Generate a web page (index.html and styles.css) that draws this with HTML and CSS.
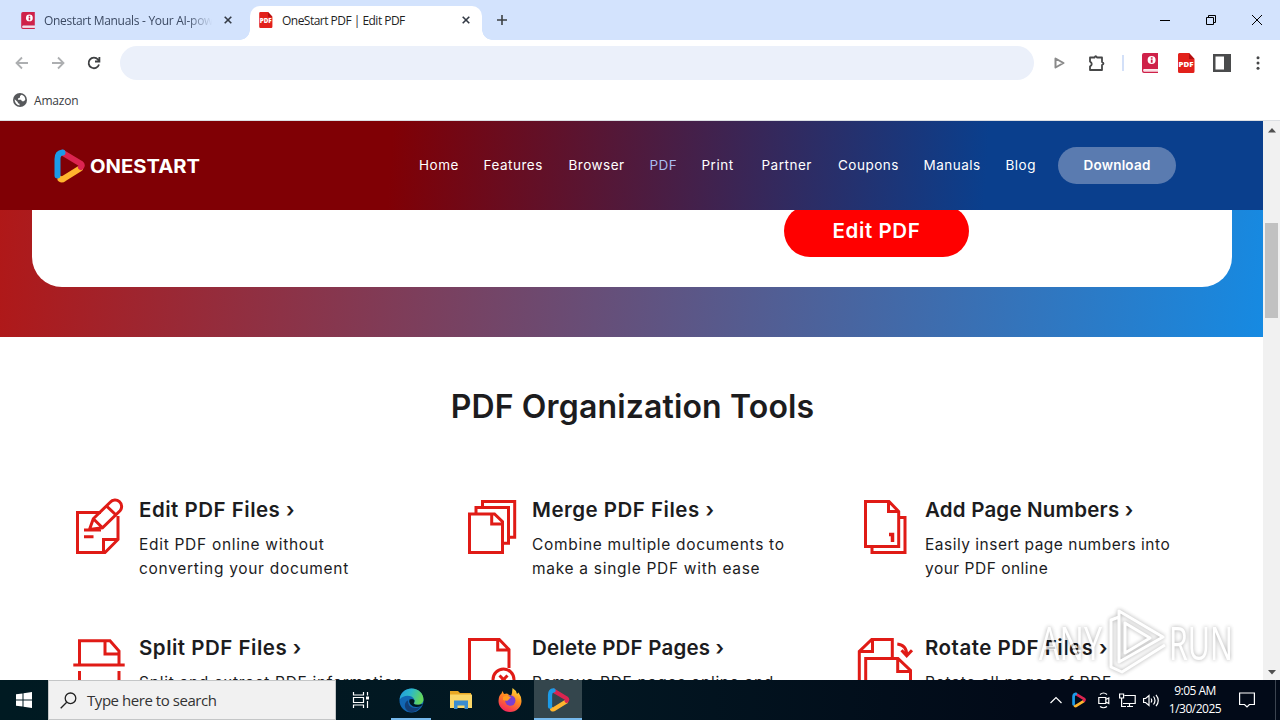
FILE: index.html
```
<!DOCTYPE html>
<html lang="en">
<head>
  <meta charset="UTF-8">
  <meta name="viewport" content="width=device-width, initial-scale=1.0">
  <title>OneStart PDF | Edit PDF</title>
  <link rel="stylesheet" href="styles.css">
</head>
<body>
  <!-- shared symbols -->
  <svg class="defs" width="0" height="0">
    <symbol id="book" viewBox="0 0 16 20">
      <path fill="#cf2149" d="M2 0h14v16H2a1.5 1.5 0 0 0 0 2.6h14V20H2a2 2 0 0 1-2-2V2a2 2 0 0 1 2-2z"/>
      <path fill="#fbdde3" d="M1.6 16.4H16v2H1.6z"/>
      <circle cx="9.6" cy="7" r="4" fill="#fff"/>
      <path fill="#cf2149" d="M8.8 4.3h1.8v1.5H8.8zM8.8 6.4h1.8v3.4H8.8z"/>
    </symbol>
    <symbol id="pdf" viewBox="0 0 17 20">
      <path fill="#e2211b" d="M1.500 0h9.500l5.500 6v12.500a1.500 1.500 0 0 1-1.500 1.500H1.500a1.500 1.500 0 0 1-1.500-1.500V1.500a1.500 1.500 0 0 1 1.500-1.500z"/>
      <path fill="#b30f10" d="M11 0l5.500 6h-5.500z"/>
      <text x="0.600" y="13.800" class="pdf-label" textLength="15" lengthAdjust="spacingAndGlyphs">PDF</text>
    </symbol>
    <symbol id="play" viewBox="0 0 31 34">
      <path fill="none" stroke="#ffb52e" stroke-width="6" stroke-linecap="round" d="M6.500 30Q8 31 10 29.500L26 19.500"/>
      <path fill="none" stroke="#dc2450" stroke-width="6" stroke-linecap="round" stroke-linejoin="round" d="M9 4L26.500 14.500Q28.500 16 27 18"/>
      <path fill="none" stroke="#1b9be8" stroke-width="6" stroke-linecap="round" d="M3.500 26.500V10Q3.500 4 8.500 3.500"/>
    </symbol>
  </svg>

  <div class="tabs">
    <div class="tab">
      <svg class="favicon" width="14" height="17"><use href="#book"/></svg>
      <span class="tab-title faded">Onestart Manuals - Your AI-pow</span>
      <svg class="tab-close" width="8" height="8" viewBox="0 0 8 8"><path d="M.7.7l6.600 6.600M7.300.7L.7 7.300"/></svg>
    </div>
    <div class="tab active">
      <svg class="favicon" width="14" height="16"><use href="#pdf"/></svg>
      <span class="tab-title">OneStart PDF | Edit PDF</span>
      <svg class="tab-close" width="8" height="8" viewBox="0 0 8 8"><path d="M.7.7l6.600 6.600M7.300.7L.7 7.300"/></svg>
    </div>
    <svg class="new-tab" width="10" height="10" viewBox="0 0 10 10"><path d="M5 0v10M0 5h10"/></svg>
    <div class="window-buttons">
      <svg width="10" height="10" viewBox="0 0 10 10"><path d="M0 5.500h10"/></svg>
      <svg width="10" height="10" viewBox="0 0 10 10"><path d="M.5 2.500h7v7h-7zM2.500 2.500v-2h7v7h-2"/></svg>
      <svg width="10" height="10" viewBox="0 0 10 10"><path d="M0 0l10 10M10 0L0 10"/></svg>
    </div>
  </div>

  <div class="toolbar">
    <div class="nav-icons">
      <svg class="disabled" width="14" height="14" viewBox="0 0 14 14"><path d="M13 7H2M7 1.500L1.500 7L7 12.500"/></svg>
      <svg class="disabled" width="14" height="14" viewBox="0 0 14 14"><path d="M1 7h11M7 1.500L12.500 7L7 12.500"/></svg>
      <svg width="14" height="14" viewBox="0 0 14 14"><path d="M12 8.500A5.300 5.300 0 1 1 11 3.500L12.200 5M12.400 1v4.500H8"/></svg>
    </div>
    <div class="address"></div>
    <div class="extensions">
      <svg width="11" height="12" viewBox="0 0 11 12"><path fill="none" stroke="#8a8a8a" stroke-width="2" stroke-linejoin="round" d="M1.500 10.500V1.500L9.500 6z"/></svg>
      <svg class="puzzle" width="18" height="18" viewBox="0 0 18 18"><path fill="none" stroke="#464748" stroke-width="1.800" stroke-linejoin="round" d="M2 3.500h4.500Q7.700 1 9 3.500h5V8q3 1.500 0 3v5H2v-3.500q3.500-2.500 0-5z"/></svg>
      <span class="divider"></span>
      <svg class="ext-book" width="16" height="20"><use href="#book"/></svg>
      <svg class="ext-pdf" width="17" height="20"><use href="#pdf"/></svg>
      <svg class="ext-panel" width="18" height="18" viewBox="0 0 18 18"><path fill="#4a4b4c" d="M0 0h18v18H0z"/><path fill="#fff" d="M2.500 2.500H11v13H2.500z"/></svg>
      <svg class="ext-more" width="4" height="14" viewBox="0 0 4 14"><g fill="#464748"><circle cx="2" cy="1.800" r="1.500"/><circle cx="2" cy="7" r="1.500"/><circle cx="2" cy="12.200" r="1.500"/></g></svg>
    </div>
  </div>

  <div class="bookmarks">
    <svg width="14" height="14" viewBox="0 0 14 14"><circle cx="7" cy="7" r="7" fill="#56585b"/><path fill="#fff" d="M8.500 1.800L7 3v1.500L5 5.500v1.200h3l1 1.600h1.800l1.500-1.500A5.400 5.400 0 0 0 8.500 1.800zM1.700 6.200l3 2.800.3 1.200 1.500.6v1.600A5.500 5.500 0 0 1 1.700 6.200z"/></svg>
    <span>Amazon</span>
  </div>

  <div class="viewport">
    <div class="page">
      <header class="header">
        <div class="logo">
          <svg width="31" height="34"><use href="#play"/></svg>
          <svg width="112" height="20" viewBox="0 0 112 20"><text x="0" y="16.800" class="logo-text" textLength="110" lengthAdjust="spacingAndGlyphs">ONESTART</text></svg>
        </div>
        <nav class="menu">
          <a>Home</a>
          <a>Features</a>
          <a>Browser</a>
          <a class="current">PDF</a>
          <a>Print</a>
          <a>Partner</a>
          <a>Coupons</a>
          <a>Manuals</a>
          <a>Blog</a>
          <a class="download">Download</a>
        </nav>
      </header>

      <section class="hero">
        <div class="hero-card">
          <a class="edit-button">Edit PDF</a>
        </div>
      </section>

      <h2>PDF Organization Tools</h2>

      <section class="tools">
        <div class="tool">
          <svg class="tool-icon" viewBox="0 0 70 60"><path d="M32 16.500H8.500v40H36L49 43.500V20M34.500 56V43.500H49M41.200 6.200L24.300 22.800L20.500 33.500L33.500 31.800L51 14.800A6.200 6.200 0 0 0 41.200 6.200zM24.300 22.800L33.500 31.800M37.500 10L47 19M15 34H32M15 40.700H24.500"/></svg>
          <div>
            <h3>Edit PDF Files ›</h3>
            <p>Edit PDF online without<br>converting your document</p>
          </div>
        </div>
        <div class="tool">
          <svg class="tool-icon" viewBox="0 0 70 60"><path d="M7.500 18H32.500L40.500 25.700V56.500H7.500zM29.700 18V28H40.500M14 17V11.500H46.500V47.300H41M20.500 11V5.500H52.700V41.300H47"/></svg>
          <div>
            <h3>Merge PDF Files ›</h3>
            <p>Combine multiple documents to<br>make a single PDF with ease</p>
          </div>
        </div>
        <div class="tool">
          <svg class="tool-icon" viewBox="0 0 70 60"><path d="M10.500 5.500H34L43.700 15.500V50.500H10.500zM33.500 5.500V15.500H43.700M17 51V56.500H50V21.500H44"/><path class="bold" d="M34 38.500H37.500V46"/></svg>
          <div>
            <h3 class="wide-title">Add Page Numbers ›</h3>
            <p class="tight">Easily insert page numbers into<br>your PDF online</p>
          </div>
        </div>
        <div class="tool">
          <svg class="tool-icon" viewBox="0 0 70 60"><path d="M10.500 31V6.700H41L50 17V31M36 6.700V20H50M4.300 31H55.700M10.500 37V60M50 37V60"/></svg>
          <div>
            <h3>Split PDF Files ›</h3>
            <p>Split and extract PDF information</p>
          </div>
        </div>
        <div class="tool">
          <svg class="tool-icon" viewBox="0 0 70 60"><path d="M7.500 60V5.500H37.300L47 15.500V34M35.700 5.500V16H47M37.500 41.500l8 8M45.500 41.500l-8 8"/><circle cx="41.500" cy="45.500" r="10.500"/></svg>
          <div>
            <h3 class="wide-title">Delete PDF Pages ›</h3>
            <p>Remove PDF pages online and</p>
          </div>
        </div>
        <div class="tool">
          <svg class="tool-icon" viewBox="0 0 70 60"><path d="M4.300 60V17.500L16.700 5.500H37.300V24M17.500 5.500V17.500H4.300M10.700 60V24.500H43L55.500 36.500V60M42.700 24.500V37.500H56M42.300 10Q51.700 11 51.700 21M46.500 16.300L51.700 21.800L57 16.300"/></svg>
          <div>
            <h3>Rotate PDF Files ›</h3>
            <p>Rotate all pages of PDF</p>
          </div>
        </div>
      </section>
    </div>

    <div class="scrollbar">
      <svg width="8" height="5" viewBox="0 0 8 5"><path d="M0 4.500L4 0l4 4.500z"/></svg>
      <div class="thumb"></div>
      <svg width="8" height="5" viewBox="0 0 8 5"><path d="M0 0h8L4 4.500z"/></svg>
    </div>
  </div>

  <svg class="watermark" width="210" height="70" viewBox="0 0 210 70">
    <text x="8" y="53" textLength="63" lengthAdjust="spacingAndGlyphs">ANY</text>
    <path d="M88 10L80 13V60L91 65L134 38M88 4V55L132 30zM94 16V46L119 31z"/>
    <text x="138" y="53" textLength="64" lengthAdjust="spacingAndGlyphs">RUN</text>
  </svg>

  <div class="taskbar">
    <div class="start">
      <svg width="16" height="16" viewBox="0 0 16 16"><path fill="#fff" d="M0 2.300L6.500 1.400V7.500H0zM7.500 1.200L16 0V7.500H7.500zM0 8.500H6.500V14.600L0 13.700zM7.500 8.500H16V16L7.500 14.800z"/></svg>
    </div>
    <div class="search">
      <svg width="17" height="17" viewBox="0 0 17 17"><path fill="none" stroke="#222" stroke-width="1.300" d="M6.700 10.300L.7 16.300"/><circle cx="10.500" cy="6.300" r="5.300" fill="none" stroke="#222" stroke-width="1.300"/></svg>
      <span>Type here to search</span>
    </div>
    <div class="task task-view">
      <svg width="18" height="16" viewBox="0 0 18 16"><path fill="none" stroke="#fff" stroke-width="1.200" d="M1.500 0v3h10V0M1.500 5.500h10v5h-10zM1.500 16v-3h10v3M15.500 0v3.500M15.500 9v7"/><path fill="#fff" d="M14 4.500h3v3h-3z"/></svg>
    </div>
    <div class="task running">
      <svg width="25" height="25" viewBox="0 0 25 25">
        <defs>
          <linearGradient id="edge" x1="0" y1="0" x2="1" y2=".3"><stop offset="0" stop-color="#2399dd"/><stop offset=".5" stop-color="#2cb8c9"/><stop offset="1" stop-color="#63d65c"/></linearGradient>
        </defs>
        <circle cx="12.500" cy="12.500" r="12" fill="#1267b4"/>
        <path fill="url(#edge)" d="M.6 11.500C1.500 4 7 .5 12.500.5C20 .5 24.600 6 24.500 11.500C24.400 16 20 17.500 16 16.500C14 15.800 16 14.500 15.500 12C14 7 5 6 .6 11.500z"/>
        <path fill="#123f78" d="M9 12.500C8.500 19 15 22 21.800 18.500C19 23 14 25 9.500 23.500C4 20 5.500 13.500 9 12.500z"/>
        <path fill="#001820" d="M10.500 11.500Q14.500 10 15.500 12.500Q15.500 14.500 14.500 15.300Q15.500 17.200 20 16.800L24 16L21.800 18.300Q15 20.500 11.500 16.500Q9.500 13.500 10.500 11.500z"/>
      </svg>
    </div>
    <div class="task">
      <svg width="22" height="18" viewBox="0 0 22 18"><path fill="#e9a824" d="M0 0h8l2 2h11v4H0z"/><path fill="#fbd768" d="M0 3.500h22V17H0z"/><path fill="#3b8cd0" d="M4 9.500h14V18h-3.500v-3.500h-7V18H4z"/></svg>
    </div>
    <div class="task">
      <svg width="24" height="24" viewBox="0 0 24 24">
        <defs>
          <linearGradient id="fox" x1=".8" y1="0" x2=".3" y2="1"><stop offset="0" stop-color="#ffe23f"/><stop offset=".45" stop-color="#ff8a1f"/><stop offset="1" stop-color="#f5225f"/></linearGradient>
        </defs>
        <path fill="url(#fox)" d="M4.500 3L6 6L9 5.500L13 8L14 5L14.500 0Q18 2 19 6L20.500 4.500Q23.500 8.500 23.500 13A11.500 11 0 0 1 .5 13Q.5 7.500 3.500 5.500z"/>
        <circle cx="12.300" cy="12.500" r="5.200" fill="#7a3fd0"/>
        <path fill="#ff9b20" d="M5 9Q9 6.500 13 9.500Q10.500 11 10 12.500Q7.500 13 5 12z"/>
      </svg>
    </div>
    <div class="task selected">
      <svg width="23" height="24"><use href="#play"/></svg>
    </div>
    <div class="tray">
      <svg class="caret" width="12" height="8" viewBox="0 0 12 8"><path d="M.5 7L6 1.500L11.500 7"/></svg>
      <svg class="tray-app" width="14" height="16"><use href="#play"/></svg>
      <svg class="camera" width="12" height="17" viewBox="0 0 12 17"><path d="M.8 5.500h7v6h-7zM7.800 7.500l3-1.500v5.500l-3-1.500M2 2.500Q5.500-.5 9 2.500M2 14.500Q5.500 17 9 14.500"/></svg>
      <svg width="17" height="15" viewBox="0 0 17 15"><path d="M5.500 2.500h10.700v8H4M8 13.500h6M10.500 10.500v3M.6 1h4v4h-4zM2.600 5v8.500H7"/></svg>
      <svg width="17" height="13" viewBox="0 0 17 13"><path d="M.6 4.500h2L6 1.500v10l-3.400-3H.6zM8 4.500q1.500 2 0 4M10.500 2.500q3 4 0 8M13 .8q4.500 5.700 0 11.400"/></svg>
      <div class="clock">9:05 AM<br>1/30/2025</div>
      <svg width="16" height="16" viewBox="0 0 16 16"><path d="M.6 1h14.800v11.500h-5L8 15L5.500 12.500H.6z"/></svg>
    </div>
  </div>
</body>
</html>
```
FILE: styles.css
```
body {
  margin: 0;
  width: 1280px;
  height: 720px;
  overflow: hidden;
  display: flex;
  flex-direction: column;
  background: #fff;
  font-family: Inter, sans-serif;
  color: #1c1c1e;
}

.defs {
  position: absolute;
}

.pdf-label {
  font: 800 7.5px "Open Sans", sans-serif;
  fill: #fff;
}

/* browser window */
.tabs,
.toolbar,
.bookmarks,
.taskbar {
  font-family: "Open Sans", sans-serif;
  font-size: 12px;
}

.tabs {
  height: 40px;
  flex: none;
  background: #d3e3fd;
  display: flex;
  align-items: center;
}

.tab {
  box-sizing: border-box;
  width: 250px;
  height: 40px;
  padding: 0 18px 0 21px;
  display: flex;
  align-items: center;
  color: #3c4a63;
}

.tab.active {
  position: relative;
  width: 232px;
  height: 34px;
  margin-top: 6px;
  padding: 0 12px 6px 9px;
  background: #fff;
  border-radius: 10px 10px 0 0;
  color: #1f1f1f;
}

/* curved feet of the active tab */
.tab.active::before,
.tab.active::after {
  content: "";
  position: absolute;
  bottom: 0;
  width: 10px;
  height: 10px;
}

.tab.active::before {
  left: -10px;
  background: radial-gradient(circle at 0 0, transparent 9.5px, #fff 10px);
}

.tab.active::after {
  right: -10px;
  background: radial-gradient(circle at 100% 0, transparent 9.5px, #fff 10px);
}

.tab-title {
  flex: 1;
  margin-left: 9px;
  white-space: nowrap;
  overflow: hidden;
  letter-spacing: -0.52px;
}

.faded {
  flex: none;
  width: 170px;
  letter-spacing: -0.3px;
  -webkit-mask-image: linear-gradient(90deg, #000 84%, transparent 99%);
  mask-image: linear-gradient(90deg, #000 84%, transparent 99%);
}

.tab-close {
  margin-left: auto;
  stroke: #333a45;
  stroke-width: 1.6;
}

.new-tab {
  margin-left: 15px;
  stroke: #3c4043;
  stroke-width: 1.6;
}

.window-buttons {
  margin-left: auto;
  margin-right: 18px;
  display: flex;
  gap: 36px;
  fill: none;
  stroke: #000;
}

.toolbar {
  height: 46px;
  flex: none;
  display: flex;
  align-items: center;
}

.nav-icons {
  display: flex;
  gap: 22px;
  padding-left: 15px;
  width: 105px;
  fill: none;
  stroke: #3f4143;
  stroke-width: 1.8;
}

.nav-icons .disabled {
  stroke: #adafb1;
}

.address {
  width: 914px;
  height: 34px;
  border-radius: 17px;
  background: #ebf0fa;
}

.extensions {
  flex: 1;
  display: flex;
  align-items: center;
  padding-left: 20px;
}

.puzzle {
  margin: 0 16px 0 23px;
}

.divider {
  width: 2px;
  height: 16px;
  background: #d3e0f8;
}

.ext-book {
  margin-left: 18px;
}

.ext-pdf {
  margin: 0 18px 0 20px;
}

.ext-more {
  margin-left: 25px;
}

.bookmarks {
  height: 35px;
  flex: none;
  box-sizing: border-box;
  padding: 0 0 6px 13px;
  display: flex;
  align-items: center;
  gap: 7px;
  border-bottom: 1px solid #dcdfe3;
  color: #3a3c3f;
  letter-spacing: -0.2px;
}

/* site */
.viewport {
  height: 559px;
  flex: none;
  display: flex;
}

.page {
  width: 1263px;
  height: 559px;
  overflow: hidden;
}

.header {
  position: relative;
  z-index: 1;
  box-sizing: border-box;
  height: 89px;
  padding: 0 87px 0 54px;
  display: flex;
  align-items: center;
  justify-content: space-between;
  background: linear-gradient(94deg, #800005 31%, #0a3f8d 78%);
}

.logo {
  display: flex;
  align-items: center;
  gap: 5px;
}

.logo-text {
  font: 700 19px Inter, sans-serif;
  fill: #fff;
}

.menu {
  display: grid;
  grid-template-columns: 64.5px 85px 81px 52px 60px 76.5px 85.5px 82px 52.5px 118px;
  align-items: center;
  font-size: 13.5px;
  color: #fff;
}

.menu a {
  letter-spacing: 0.5px;
  margin-top: -1px;
}

.menu .current {
  color: #a9bdf0;
}

.menu .download {
  height: 37px;
  margin-top: 0;
  line-height: 37px;
  border-radius: 19px;
  background: #5a7bb0;
  text-align: center;
  font-weight: 600;
  letter-spacing: 0.2px;
}

.hero {
  height: 127px;
  padding: 0 31px 0 32px;
  background: linear-gradient(95deg, #b01818, #168ae2);
}

.hero-card {
  height: 77px;
  background: #fff;
  border-radius: 0 0 30px 30px;
  display: flex;
}

.edit-button {
  width: 185px;
  height: 52px;
  margin: -5px 0 0 752px;
  border-radius: 26px;
  background: #f00;
  color: #fff;
  font-size: 20.5px;
  font-weight: 600;
  line-height: 52px;
  text-align: center;
  letter-spacing: 0.6px;
}

h2 {
  margin: 49px 0 69px;
  padding-left: 2px;
  text-align: center;
  font-size: 32px;
  line-height: 41px;
  font-weight: 600;
  letter-spacing: 0.15px;
}

.tools {
  padding-left: 69px;
  display: grid;
  grid-template-columns: repeat(3, 393px);
  row-gap: 53px;
}

.tool {
  display: flex;
  height: 85px;
}

.tool-icon {
  width: 70px;
  height: 60px;
  flex: none;
  fill: none;
  stroke: #e01b16;
  stroke-width: 3;
}

.tool-icon .bold {
  stroke-width: 3.5;
}

.tool h3 {
  margin: 0 0 9px;
  font-size: 20.5px;
  line-height: 28px;
  font-weight: 600;
  letter-spacing: 0.5px;
}

.tool .wide-title {
  letter-spacing: 0.2px;
}

.tool p {
  margin: 0;
  font-size: 15.5px;
  line-height: 24px;
  letter-spacing: 0.7px;
  white-space: nowrap;
}

.tool .tight {
  letter-spacing: 0.5px;
}

.scrollbar {
  width: 17px;
  background: #f1f1f1;
  display: flex;
  flex-direction: column;
  align-items: center;
  fill: #505050;
}

.scrollbar svg {
  margin: 7px 0 5px;
}

.thumb {
  width: 13px;
  height: 95px;
  margin: 85px 0 auto;
  background: #c1c1c1;
}

.watermark {
  position: absolute;
  left: 1031px;
  top: 607px;
  opacity: 0.75;
  filter: drop-shadow(0 0 2px rgba(0, 0, 0, 0.45));
}

.watermark text {
  font: 500 46px "Open Sans", sans-serif;
  fill: #fff;
}

.watermark path {
  fill: none;
  stroke: #fff;
  stroke-width: 3;
  stroke-linejoin: round;
}

/* taskbar */
.taskbar {
  height: 40px;
  flex: none;
  display: flex;
  background: linear-gradient(90deg, #001a22, #021722 45%, #020a18 80%);
  color: #fff;
}

.start {
  width: 48px;
  display: flex;
  align-items: center;
  justify-content: center;
}

.search {
  box-sizing: border-box;
  width: 288px;
  padding-left: 11px;
  display: flex;
  align-items: center;
  gap: 10px;
  background: #f1f1f1;
  border: 1px solid #c4c6c7;
  color: #333;
  font-size: 15px;
  letter-spacing: -0.45px;
}

.task {
  box-sizing: border-box;
  width: 49px;
  display: flex;
  align-items: center;
  justify-content: center;
}

.task-view {
  width: 50px;
}

.task.running {
  background: linear-gradient(#76b9ed, #76b9ed) center bottom / 40px 2px no-repeat;
  width: 50px;
}

.task.selected {
  width: 48px;
  padding-top: 2px;
  background: #34464d;
  border-bottom: 2px solid #76b9ed;
}

.tray {
  box-sizing: border-box;
  margin-left: auto;
  margin-right: 4px;
  padding-right: 20px;
  border-right: 1px solid #3c4450;
  display: flex;
  align-items: center;
  fill: none;
  stroke: #fff;
  stroke-width: 1.2;
  gap: 7px;
}

.caret {
  margin-right: 3px;
}

.tray-app {
  margin-right: 5px;
  stroke: none;
}

.camera {
  margin-right: 2px;
}

.clock {
  width: 58px;
  margin: 0 8px 0 -1px;
  text-align: center;
  line-height: 18px;
  white-space: nowrap;
  letter-spacing: -0.5px;
}
```
